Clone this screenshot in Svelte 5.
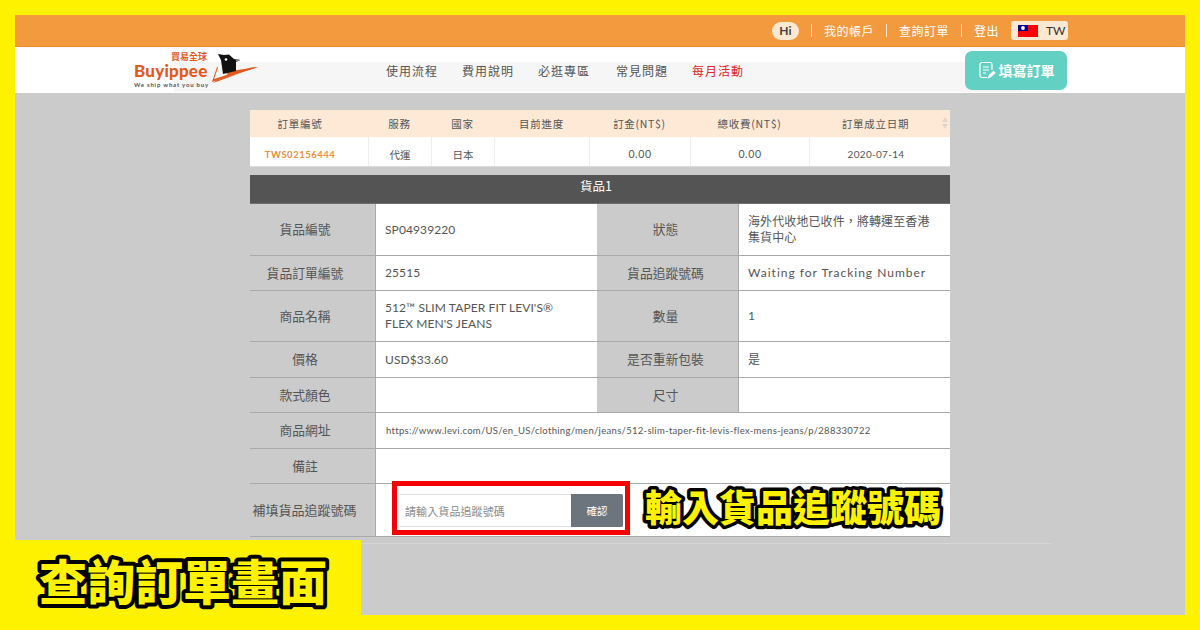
<script>
	const nav = ["使用流程", "費用說明", "必逛專區", "常見問題"];
	const heads = ["訂單編號", "服務", "國家", "目前進度", "訂金(NT$)", "總收費(NT$)", "訂單成立日期"];
</script>

<div class="frame">
	<div class="page">
		<div class="topbar">
			<span class="hi">Hi</span>
			<span class="sep"></span>
			<span class="toplink">我的帳戶</span>
			<span class="sep"></span>
			<span class="toplink">查詢訂單</span>
			<span class="sep"></span>
			<span class="toplink">登出</span>
			<span class="sep short"></span>
			<span class="lang">
				<svg width="20" height="12" viewBox="0 0 20 12"><rect width="20" height="12" fill="#fe0000"/><rect width="10" height="6" fill="#000095"/><circle cx="5" cy="3" r="1.9" fill="#fff"/></svg>
				<span>TW</span>
			</span>
		</div>
		<div class="navbar">
			<div class="logo">
				<div class="logotext">
					<span class="zh">買易全球</span>
					<span class="brand">Buyippee</span>
					<span class="tag">We ship what you buy</span>
				</div>
				<svg class="bird" width="48" height="33" viewBox="0 0 48 33">
					<path d="M6 15 L1 30 L47 15 L40 15.500 L3 27 L7 15.500 Z" fill="#e2591f"/>
					<path d="M13 20 L47 15 L9 27 L17 22 Z" fill="#e2591f"/>
					<path d="M2 31 L6 28 L30 21 Z" fill="#e2591f"/>
					<path d="M7 2 L13 3 L18 2.500 L23 7 L29 8 L25 10 L25 19 L12 22 L10 8 Z" fill="#111"/>
					<path d="M25 7 L29.500 8 L25 10 Z" fill="#888"/>
					<circle cx="15" cy="7.500" r="1.300" fill="#fff"/>
				</svg>
			</div>
			<div class="strip">
				<div class="links">
					{#each nav as n}
						<span>{n}</span>
					{/each}
					<span class="red">每月活動</span>
				</div>
			</div>
			<div class="fill">
				<svg width="18" height="18" viewBox="0 0 18 18" fill="none" stroke="#fff" stroke-width="1.2"><path d="M9 16.500H4a2 2 0 0 1-2-2V3.500a2 2 0 0 1 2-2h8a2 2 0 0 1 2 2V9"/><path d="M5 6h6M5 9h6M5 12h3"/><path d="M10.500 16.500l1-2.500 4-3.500 1.300 1.500-4 3.500z" fill="#fff"/></svg>
				<span>填寫訂單</span>
			</div>
		</div>
		<div class="content">
			<div class="orders">
				<div class="ohead">
					{#each heads as h}
						<div>{h}</div>
					{/each}
					<svg class="sort" width="6" height="14" viewBox="0 0 6 14"><path d="M3 1l3 5H0zM3 13L0 8h6z" fill="#e0d6cb"/></svg>
				</div>
				<div class="orow">
					<div class="oid">TWS02156444</div>
					<div>代運</div>
					<div>日本</div>
					<div></div>
					<div class="num">0.00</div>
					<div class="num">0.00</div>
					<div class="num date">2020-07-14</div>
				</div>
			</div>
			<div class="goods">貨品1</div>
			<div class="detail">
				<div class="lab first h52">貨品編號</div>
				<div class="val">SP04939220</div>
				<div class="lab">狀態</div>
				<div class="val">海外代收地已收件，將轉運至香港<br />集貨中心</div>

				<div class="lab first h35">貨品訂單編號</div>
				<div class="val">25515</div>
				<div class="lab">貨品追蹤號碼</div>
				<div class="val waiting">Waiting for Tracking Number</div>

				<div class="lab first h51">商品名稱</div>
				<div class="val">512™ SLIM TAPER FIT LEVI'S®<br />FLEX MEN'S JEANS</div>
				<div class="lab">數量</div>
				<div class="val">1</div>

				<div class="lab first h36">價格</div>
				<div class="val">USD$33.60</div>
				<div class="lab">是否重新包裝</div>
				<div class="val">是</div>

				<div class="lab first h35">款式顏色</div>
				<div class="val"></div>
				<div class="lab">尺寸</div>
				<div class="val"></div>

				<div class="lab first h36">商品網址</div>
				<div class="val wide url">https://www.levi.com/US/en_US/clothing/men/jeans/512-slim-taper-fit-levis-flex-mens-jeans/p/288330722</div>

				<div class="lab first h35">備註</div>
				<div class="val wide"></div>

				<div class="lab h53 small">補填貨品追蹤號碼</div>
				<div class="val wide track">
					<div class="redbox">
						<div class="field">
							<span class="ph">請輸入貨品追蹤號碼</span>
							<span class="ok">確認</span>
						</div>
					</div>
				</div>
			</div>
		</div>
	</div>
	<svg class="callout" width="310" height="62" viewBox="0 0 310 62">
		<text x="5" y="44">輸入貨品追蹤號碼</text>
	</svg>
	<div class="hline"></div>
	<div class="corner">
		<svg width="320" height="86" viewBox="0 0 320 86">
			<text x="7" y="60">查詢訂單畫面</text>
		</svg>
	</div>
</div>

<style>
	:global(body) {
		margin: 0;
		background: #fff200;
	}
	.frame {
		position: relative;
		width: 1200px;
		height: 630px;
		box-sizing: border-box;
		padding: 15px;
		background: #fff200;
		overflow: hidden;
		font-family: "Noto Sans CJK TC", "Lato", sans-serif;
		color: #555;
	}
	.page {
		height: 600px;
		background: #cbcbcb;
		display: flex;
		flex-direction: column;
	}
	.topbar {
		height: 32px;
		box-sizing: border-box;
		background: #f3993e;
		border-bottom: 1px solid #f08a24;
		display: flex;
		align-items: center;
		padding: 0 117px 0 0;
		justify-content: flex-end;
		font-size: 12px;
		color: #fff;
		gap: 12px;
	}
	.hi {
		width: 27px;
		height: 18px;
		line-height: 18px;
		text-align: center;
		border-radius: 9px;
		background: #fde8d2;
		color: #444;
		font-family: "Lato", sans-serif;
		font-weight: 700;
		font-size: 12px;
	}
	.sep {
		width: 1px;
		height: 13px;
		background: #fde8d2;
	}
	.sep.short {
		margin-right: -13px;
	}
	.toplink {
		letter-spacing: 0.5px;
	}
	.lang {
		width: 57px;
		height: 19px;
		box-sizing: border-box;
		padding-left: 7px;
		display: flex;
		align-items: center;
		gap: 8px;
		background: #fde8d2;
		border-radius: 3px;
		color: #333;
		font-family: "Lato", sans-serif;
		font-size: 12px;
	}
	.navbar {
		height: 46px;
		background: #fff;
		position: relative;
		display: flex;
		padding-left: 119px;
		box-sizing: border-box;
	}
	.logo {
		width: 125px;
		display: flex;
		align-items: flex-start;
		position: relative;
		z-index: 1;
		flex: none;
	}
	.logotext {
		display: flex;
		flex-direction: column;
		width: 73px;
		margin-top: 5px;
	}
	.zh {
		align-self: flex-end;
		font-size: 9px;
		line-height: 10px;
		font-weight: 700;
		color: #e2591f;
	}
	.brand {
		font-family: "Lato", sans-serif;
		font-weight: 900;
		font-size: 17px;
		line-height: 16px;
		color: #e2591f;
		letter-spacing: 0.2px;
		margin-top: 1px;
	}
	.tag {
		font-family: "Lato", sans-serif;
		font-size: 6px;
		line-height: 10px;
		font-weight: 700;
		color: #555;
		letter-spacing: 0.8px;
		white-space: nowrap;
		margin-top: 1px;
	}
	.bird {
		margin-top: 5px;
		margin-left: 4px;
		flex: none;
	}
	.strip {
		position: absolute;
		left: 159px;
		width: 848px;
		top: 15px;
		height: 30px;
		background: #f6f6f6;
	}
	.links {
		display: flex;
		gap: 24px;
		padding-left: 212px;
		margin-top: -15px;
		height: 45px;
		align-items: center;
		font-size: 12px;
		letter-spacing: 1px;
		color: #555;
		position: relative;
		top: 1px;
	}
	.links span:nth-child(4) {
		margin-left: 2px;
	}
	.red {
		color: #e8202a;
	}
	.fill {
		position: absolute;
		left: 950px;
		top: 4px;
		width: 102px;
		height: 39px;
		padding-bottom: 2px;
		box-sizing: border-box;
		background: #62d0c2;
		border-radius: 7px;
		display: flex;
		align-items: center;
		justify-content: center;
		gap: 3px;
		color: #fff;
		font-size: 14px;
		font-weight: 700;
	}
	.content {
		width: 700px;
		margin-left: 235px;
		padding-top: 17px;
	}
	.orders {
		background: #fff;
		font-size: 10.5px;
	}
	.ohead, .orow {
		display: grid;
		grid-template-columns: 118px 63px 63px 95px 101px 119px 141px;
		text-align: center;
		position: relative;
	}
	.ohead {
		height: 27px;
		line-height: 27px;
		background: #fde9d6;
		letter-spacing: 0.7px;
		color: #555;
	}
	.ohead > div:first-child {
		padding-right: 18px;
	}
	.ohead > div:nth-child(7) {
		padding-right: 8px;
	}
	.sort {
		position: absolute;
		right: 2px;
		top: 6px;
	}
	.orow {
		height: 30px;
		border-bottom: 1px solid #ddd;
		box-sizing: border-box;
	}
	.orow > div {
		padding-top: 6px;
		line-height: 23px;
	}
	.orow > div + div {
		border-left: 1px solid #eee;
	}
	.orow > .oid {
		color: #ee8e3b;
		font-family: "Lato", sans-serif;
		font-weight: 700;
		letter-spacing: 0.5px;
		font-size: 9.5px;
		padding-right: 18px;
	}
	.num {
		font-family: "Lato", sans-serif;
		font-weight: 400;
		letter-spacing: 0.6px;
	}
	.date {
		letter-spacing: 0.3px;
		padding-right: 8px;
		font-size: 10px;
	}
	.goods {
		margin-top: 8px;
		height: 29px;
		line-height: 21px;
		background: #545454;
		border-bottom: 1px solid #6f6f6f;
		box-sizing: border-box;
		text-align: center;
		color: #fff;
		font-size: 12.5px;
		padding-right: 8px;
	}
	.detail {
		display: grid;
		grid-template-columns: 125px 222px 141px 212px;
		font-size: 12px;
	}
	.detail > div {
		border-bottom: 1px solid #a9a9a9;
		box-sizing: border-box;
		display: flex;
		align-items: center;
	}
	.lab {
		background: #cbcbcb;
		justify-content: center;
		color: #555;
		font-size: 12.8px;
		padding-right: 4px;
		padding-bottom: 2px;
	}
	.lab.first {
		padding-right: 15px;
	}
	.val {
		background: #fff;
		border-left: 1px solid #a9a9a9;
		padding: 0 9px;
		line-height: 16px;
		color: #555;
		font-family: "Lato", "Noto Sans CJK TC", sans-serif;
		letter-spacing: 0.1px;
	}
	.waiting {
		letter-spacing: 1px;
		white-space: nowrap;
	}
	.wide {
		grid-column: span 3;
	}
	.url {
		font-size: 9.5px;
		letter-spacing: 0.3px;
		padding-left: 10px;
	}
	.h52 { height: 52px; }
	.h51 { height: 51px; }
	.h36 { height: 36px; }
	.h35 { height: 35px; }
	.h53 { height: 53px; }
	.small {
		font-size: 13px;
		white-space: nowrap;
		padding-right: 16px;
	}
	.track {
		position: relative;
	}
	.redbox {
		position: absolute;
		left: 16px;
		top: -3px;
		width: 238px;
		height: 54px;
		box-sizing: border-box;
		border: 5px solid #f40000;
		padding: 8px 2px 0 2px;
		background: #fff;
	}
	.field {
		height: 33px;
		display: flex;
		align-items: center;
		justify-content: space-between;
		border: 1px solid #e0e0e0;
		border-width: 1px 0;
		padding-left: 6px;
		box-sizing: border-box;
		font-family: "Noto Sans CJK TC", sans-serif;
	}
	.ph {
		font-size: 11px;
		color: #8a8a8a;
	}
	.ok {
		width: 52px;
		height: 33px;
		line-height: 33px;
		text-align: center;
		background: #6c757d;
		color: #fff;
		font-size: 10.5px;
		border-radius: 0 2px 2px 0;
	}
	.callout text, .corner text {
		font-weight: 900;
		fill: #fff200;
		stroke: #000;
		stroke-linejoin: round;
		paint-order: stroke fill;
	}
	.callout {
		position: absolute;
		left: 640px;
		top: 478px;
	}
	.callout text {
		font-size: 37px;
		stroke-width: 7px;
	}
	.hline {
		position: absolute;
		left: 361px;
		top: 543px;
		width: 690px;
		height: 1px;
		background: #d6d6d6;
	}
	.corner {
		position: absolute;
		left: 0;
		top: 540px;
		width: 361px;
		height: 90px;
		background: #fff200;
		padding: 0 0 0 32px;
		box-sizing: border-box;
	}
	.corner text {
		font-size: 48px;
		stroke-width: 8px;
	}
</style>
